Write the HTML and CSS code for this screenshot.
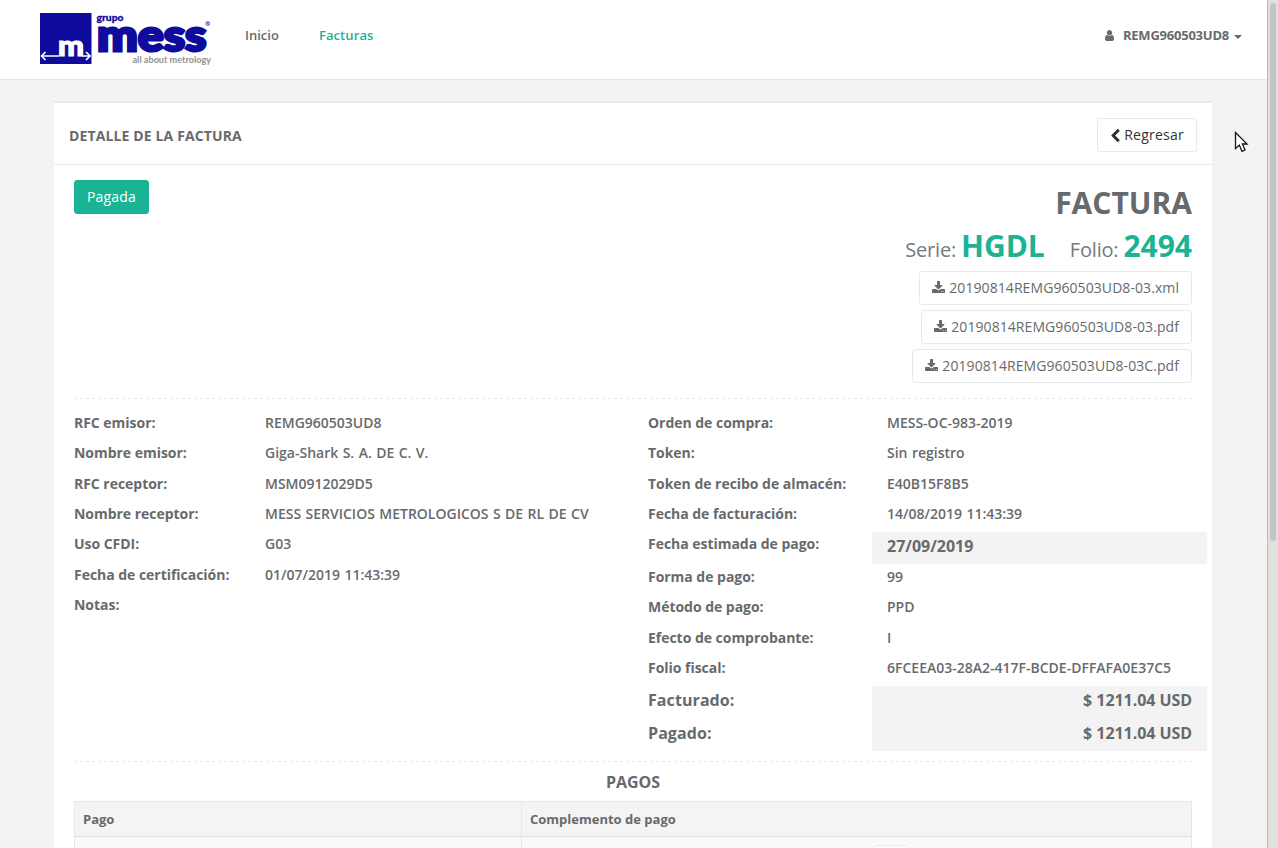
FILE: index.html
```html
<!DOCTYPE html>
<html lang="es">
<head>
<meta charset="utf-8">
<title>Detalle de la factura</title>
<link rel="stylesheet" href="styles.css">
</head>
<body>
<svg class="sprite" aria-hidden="true">
  <symbol id="download" viewBox="0 0 1664 1536"><path d="M1280 1344q0-26-19-45t-45-19-45 19-19 45 19 45 45 19 45-19 19-45zm256 0q0-26-19-45t-45-19-45 19-19 45 19 45 45 19 45-19 19-45zm128-224v320q0 40-28 68t-68 28h-1472q-40 0-68-28t-28-68v-320q0-40 28-68t68-28h465l135 136q58 56 136 56t136-56l136-136h464q40 0 68 28t28 68zm-325-569q17 41-14 70l-448 448q-18 19-45 19t-45-19l-448-448q-31-29-14-70 17-39 59-39h256v-448q0-26 19-45t45-19h256q26 0 45 19t19 45v448h256q42 0 59 39z"/></symbol>
</svg>
<div class="page">
  <header class="topbar">
    <svg class="logo" width="174" height="56" viewBox="0 0 174 56" role="img" aria-label="grupo mess">
      <rect x="0" y="1" width="51.500" height="51" fill="#0f0c9d"/>
      <text class="brand mark" x="18" y="44.300" font-size="29" textLength="26" lengthAdjust="spacingAndGlyphs">m</text>
      <path d="M2 44H19M42 44H50M5.500 40L1.500 44L5.500 48M46 40L50 44L46 48" fill="none" stroke="#fff" stroke-width="1.700"/>
      <text class="brand grupo" x="56.500" y="9" font-size="10" textLength="27" lengthAdjust="spacingAndGlyphs">grupo</text>
      <text class="brand big" x="57" y="38.700" font-size="43.500" textLength="109.500" lengthAdjust="spacingAndGlyphs">mess</text>
      <circle cx="167.700" cy="11.500" r="2" fill="none" stroke="#5150b5" stroke-width=".8"/>
      <text class="reg" x="166.500" y="13" font-size="4">R</text>
      <text class="tag" x="92.500" y="51" font-size="9.500" textLength="78.500" lengthAdjust="spacingAndGlyphs">all about metrology</text>
    </svg>
    <nav class="nav">
      <a>Inicio</a>
      <a class="active">Facturas</a>
    </nav>
    <div class="user">
      <svg class="user-icon" viewBox="0 0 1280 1536"><path d="M1280 1271q0 109-62.500 187t-150.500 78h-854q-88 0-150.500-78t-62.500-187q0-85 8.500-160.500t31.500-152 58.500-131 94-89 134.500-34.500q131 128 313 128t313-128q76 0 134.500 34.500t94 89 58.500 131 31.500 152 8.500 160.500zm-256-887q0 159-112.500 271.500t-271.500 112.500-271.500-112.500-112.500-271.500 112.500-271.500 271.500-112.500 271.500 112.500 112.500 271.500z"/></svg>
      <span>REMG960503UD8</span>
      <i class="caret"></i>
    </div>
  </header>
  <main class="card">
    <div class="card-title">
      <h5>DETALLE DE LA FACTURA</h5>
      <a class="btn back"><svg class="chevron" viewBox="154 38 1056 1588"><path d="M1171 301l-531 531 531 531q19 19 19 45t-19 45l-166 166q-19 19-45 19t-45-19l-742-742q-19-19-19-45t19-45l742-742q19-19 45-19t45 19l166 166q19 19 19 45t-19 45z"/></svg>Regresar</a>
    </div>
    <div class="card-body">
      <section class="summary">
        <span class="btn paid">Pagada</span>
        <div class="invoice">
          <h1>FACTURA</h1>
          <div class="number"><span>Serie: <b>HGDL</b></span><span>Folio: <b>2494</b></span></div>
          <div class="files">
            <a class="btn"><svg class="dl"><use href="#download"/></svg>20190814REMG960503UD8-03.xml</a>
            <a class="btn"><svg class="dl"><use href="#download"/></svg>20190814REMG960503UD8-03.pdf</a>
            <a class="btn"><svg class="dl"><use href="#download"/></svg>20190814REMG960503UD8-03C.pdf</a>
          </div>
        </div>
      </section>
      <div class="divider"></div>
      <section class="details">
        <dl class="issuer">
          <dt>RFC emisor:</dt><dd>REMG960503UD8</dd>
          <dt>Nombre emisor:</dt><dd>Giga-Shark S. A. DE C. V.</dd>
          <dt>RFC receptor:</dt><dd>MSM0912029D5</dd>
          <dt>Nombre receptor:</dt><dd>MESS SERVICIOS METROLOGICOS S DE RL DE CV</dd>
          <dt>Uso CFDI:</dt><dd>G03</dd>
          <dt>Fecha de certificación:</dt><dd>01/07/2019 11:43:39</dd>
          <dt>Notas:</dt><dd></dd>
        </dl>
        <dl class="order">
          <dt>Orden de compra:</dt><dd>MESS-OC-983-2019</dd>
          <dt>Token:</dt><dd>Sin registro</dd>
          <dt>Token de recibo de almacén:</dt><dd>E40B15F8B5</dd>
          <dt>Fecha de facturación:</dt><dd>14/08/2019 11:43:39</dd>
          <dt>Fecha estimada de pago:</dt><dd class="shade">27/09/2019</dd>
          <dt>Forma de pago:</dt><dd>99</dd>
          <dt>Método de pago:</dt><dd>PPD</dd>
          <dt>Efecto de comprobante:</dt><dd>I</dd>
          <dt>Folio fiscal:</dt><dd>6FCEEA03-28A2-417F-BCDE-DFFAFA0E37C5</dd>
          <dt class="total">Facturado:</dt><dd class="shade amount">$ 1211.04 USD</dd>
          <dt class="total">Pagado:</dt><dd class="shade amount">$ 1211.04 USD</dd>
        </dl>
      </section>
      <div class="divider"></div>
      <h3>PAGOS</h3>
      <div class="table">
        <div class="th">Pago</div><div class="th">Complemento de pago</div>
        <div class="td"></div><div class="td center"><span class="btn small"></span></div>
      </div>
    </div>
  </main>
</div>
<div class="scrollbar"><div class="thumb"></div></div>
<svg class="cursor" width="16" height="24" viewBox="0 0 16 24"><path d="M1.500 1.500V17.500L5.300 14L8 20.300L11 19L8.400 13H13Z" fill="#fff" stroke="#151515" stroke-width="1.300"/></svg>
</body>
</html>
```

FILE: styles.css
```css
* { box-sizing: border-box; }
body {
  margin: 0;
  height: 848px;
  overflow: hidden;
  display: flex;
  background: #f3f3f3;
  color: #676a6c;
  font: 13px/18.57px "Open Sans", sans-serif;
}
h1, h3, h5, dl, dd { margin: 0; }
svg { fill: currentColor; flex: none; }
.sprite { position: absolute; width: 0; height: 0; }
.page { width: 1267px; height: 848px; overflow: hidden; }
.topbar {
  height: 80px;
  padding: 12px 25px 0 40px;
  display: flex;
  align-items: flex-start;
  background: #fff;
  border-bottom: 1px solid #e7e7e7;
}
.logo { fill: #0f0c9d; overflow: visible; }
.brand { font-family: Lato, sans-serif; font-weight: 900; }
.mark { fill: #fff; stroke: #fff; stroke-width: 1.2px; }
.grupo { stroke: #0f0c9d; stroke-width: .3px; }
.big { stroke: #0f0c9d; stroke-width: 3px; }
.tag { font-family: Lato, sans-serif; font-weight: 700; fill: #929292; }
.reg { font-family: Lato, sans-serif; }
.nav { display: flex; gap: 40px; margin: 14px 0 0 31px; font-weight: 600; }
.active { color: #1ab394; letter-spacing: .1px; }
.user { display: flex; align-items: center; margin: 14px 0 0 auto; font-weight: 700; }
.user span { letter-spacing: -.23px; }
.user-icon { width: 9px; height: 11px; margin-right: 9px; }
.caret { margin: 3px 0 0 5px; border: 4px solid transparent; border-top-color: currentColor; border-bottom: 0; }
.card { width: 1158px; margin: 21px 0 0 54px; background: #fff; border-top: 2px solid #e7eaec; }
.card-title {
  height: 62px;
  padding: 15px;
  display: flex;
  justify-content: space-between;
  border-bottom: 1px solid #e7eaec;
}
h5 { font-size: 14px; line-height: 16px; margin-top: 10px; font-weight: 700; letter-spacing: .13px; }
.btn {
  display: inline-flex;
  align-items: center;
  height: 34px;
  padding: 0 12px;
  border: 1px solid #e7eaec;
  border-radius: 3px;
  background: #fff;
  font-size: 14px;
  line-height: 20px;
  letter-spacing: .075px;
  white-space: nowrap;
}
.back { color: #333; letter-spacing: .25px; }
.chevron { width: 9px; height: 13px; margin: 0 4px 0 1px; }
.paid { background: #1ab394; border-color: #1ab394; color: #fff; letter-spacing: .15px; }
.card-body { padding: 15px 20px 0; }
.summary { display: flex; justify-content: space-between; align-items: flex-start; height: 218px; }
.invoice { display: flex; flex-direction: column; align-items: flex-end; }
h1 { font-size: 30px; line-height: 33px; margin-top: 6px; font-weight: 700; }
.number { display: flex; gap: 25px; margin-top: 10px; height: 42px; font-size: 20px; line-height: 33px; font-weight: 400; color: #76797b; letter-spacing: -.2px; }
.number b { font-size: 30px; font-weight: 700; color: #1ab394; letter-spacing: 0; }
.files { display: flex; flex-direction: column; align-items: flex-end; gap: 5px; }
.dl { width: 13px; height: 12px; margin: -2px 4px 0 0; }
.divider { height: 1px; background: repeating-linear-gradient(90deg, #e7eaec 0 3px, transparent 3px 6px); }
.details { display: flex; padding: 11.300px 0 10px; }
dl { display: grid; align-content: start; font-size: 14px; line-height: 15.400px; }
.issuer { width: 574px; grid-template-columns: 191px 1fr; }
.order { width: 559px; margin-right: -15px; grid-template-columns: 224px 1fr; }
dt { padding: 4.600px 0 10.400px; font-weight: 700; letter-spacing: -.03px; }
dd { padding: 4.600px 0 10.400px; font-weight: 600; word-spacing: .8px; }
.order dd { padding-left: 15px; }
.order dd.shade { padding: 6px 15px 9px; background: #f3f3f3; font-size: 16px; line-height: 17.600px; font-weight: 700; word-spacing: 0; }
dt.total { padding: 6px 0 9px; font-size: 16px; line-height: 17.600px; letter-spacing: .08px; }
.order dd.amount { text-align: right; letter-spacing: -.06px; }
h3 { margin: 11px 0 10px; font-size: 16px; line-height: 18px; font-weight: 700; text-align: center; letter-spacing: -.05px; }
.table { display: grid; grid-template-columns: 447px 670px; width: 1118px; border: 1px solid #e7e7e7; border-right: 0; }
.th { height: 35px; padding: 8px; background: #f4f4f4; border-right: 1px solid #e7e7e7; border-bottom: 1px solid #ddd; font-weight: 700; }
.td { height: 50px; padding: 8px; background: #f9f9f9; border-right: 1px solid #e7e7e7; }
.center { padding-left: 352px; }
.small { width: 34px; height: 30px; }
.scrollbar { width: 11px; height: 848px; padding: 3px 1px 0 2px; background: #e0e0de; border-left: 1px solid #b9bbbb; }
.thumb { width: 6px; height: 538px; border-radius: 3px; background: #c3c5c4; }
.cursor { position: absolute; left: 1234px; top: 131px; }
```
